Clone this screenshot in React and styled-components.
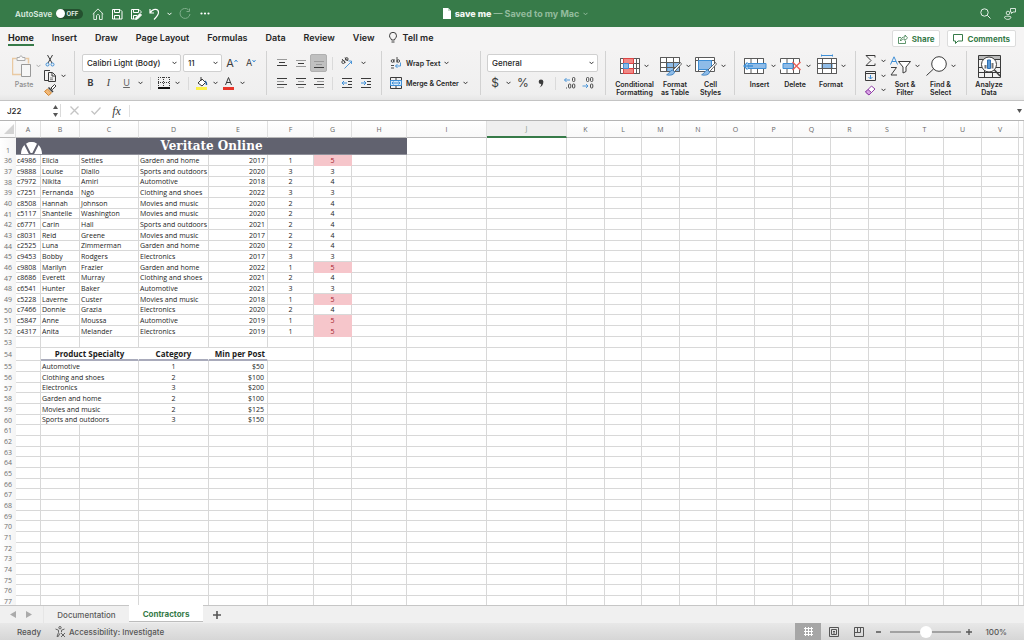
import React from "react";
import styled, { createGlobalStyle, css } from "styled-components";

const ui = `Inter, Roboto, "Liberation Sans", sans-serif`;
const sheetFont = `"Open Sans", "Noto Sans", "Liberation Sans", sans-serif`;
const ink = "#3b3b3b";
const blue = "#3f8fd6";
const green = "#377b49";

const Global = createGlobalStyle`
  * { box-sizing: border-box; }
  body { margin: 0; background: #fff; font-family: ${ui}; color: #262626; }
  button, input, select { font: inherit; color: inherit; margin: 0; }
  button { background: none; border: 0; padding: 0; }
`;

/* ---------- shell ---------- */
const Window = styled.div`
  height: 100vh;
  display: flex;
  flex-direction: column;
  overflow: hidden;
`;

const TitleBar = styled.header`
  height: 27px;
  flex: none;
  display: grid;
  grid-template-columns: 1fr auto 1fr;
  align-items: center;
  padding: 0 8px 0 15px;
  background: ${green};
  color: #fff;
`;

const Quick = styled.div`
  display: flex;
  align-items: center;
  gap: ${(p) => p.$gap || 7}px;
  justify-content: ${(p) => (p.$end ? "flex-end" : "flex-start")};
`;

const AutoSave = styled.label`
  display: flex;
  align-items: center;
  gap: 4px;
  font-size: 8px;
  font-weight: 600;
  color: #dcebe0;
  margin-right: 2px;
`;

const SwitchInput = styled.input`
  appearance: none;
  margin: 0;
  width: 27px;
  height: 10px;
  border-radius: 5px;
  background: #24502f;
  display: flex;
  align-items: center;
  justify-content: space-between;
  padding-right: 5px;
  &::before {
    content: "";
    width: 9px;
    height: 9px;
    border-radius: 50%;
    background: #fff;
  }
  &::after {
    content: "OFF";
    font: 700 6px ${ui};
    color: #e3eee6;
  }
`;

const IconButton = styled.button`
  display: flex;
  align-items: center;
  justify-content: center;
  width: ${(p) => (p.$w ? p.$w + "px" : "auto")};
  height: ${(p) => (p.$h ? p.$h + "px" : "auto")};
  flex: none;
  ${(p) =>
    p.$on &&
    css`
      background: #c0c0c0;
      border: 1px solid #b0b0b0;
      border-radius: 2px;
    `}
`;

const DocTitle = styled.h1`
  margin: 0;
  display: flex;
  align-items: center;
  gap: 4px;
  font-size: 9px;
  font-weight: 800;
  color: #f2f7f3;
`;
const Muted = styled.span`
  color: #93bb9d;
  font-weight: 700;
`;

/* ---------- ribbon ---------- */
const TabRow = styled.nav`
  height: 23px;
  flex: none;
  display: flex;
  align-items: flex-start;
  padding: 0 8px;
  background: #f5f4f4;
`;
const Tab = styled.button`
  height: 19px;
  padding-top: 3px;
  margin-right: 18px;
  font-size: 9px;
  font-weight: ${(p) => (p.$on ? 700 : 600)};
  border-bottom: 2px solid ${(p) => (p.$on ? green : "transparent")};
`;
const TellMe = styled(Tab)`
  display: flex;
  align-items: center;
  gap: 6px;
  margin-left: -4px;
`;
const Actions = styled.div`
  margin-left: auto;
  display: flex;
  gap: 7px;
  padding-top: 3px;
`;
const ActionButton = styled.button`
  height: 17px;
  display: flex;
  align-items: center;
  gap: 4px;
  padding: 0 5px;
  font-size: 8px;
  font-weight: 700;
  color: ${green};
  background: #fff;
  border: 1px solid #dcdcdc;
  border-radius: 2px;
`;

const Ribbon = styled.div`
  height: 51px;
  flex: none;
  display: flex;
  background: linear-gradient(#f4f3f3, #efefef 44px, #e6e6e6);
  border-bottom: 1px solid #c4c4c4;
`;
const Group = styled.section`
  flex: none;
  height: 44px;
  margin-top: 1px;
  display: flex;
  gap: ${(p) => p.$gap || 0}px;
  flex-direction: ${(p) => (p.$col ? "column" : "row")};
  justify-content: ${(p) => (p.$col ? "space-between" : "flex-start")};
  padding: 3px ${(p) => p.$pr ?? 6}px 3px ${(p) => p.$pl ?? 6}px;
  border-right: 1px solid ${(p) => (p.$last ? "transparent" : "#d2d2d2")};
  width: ${(p) => p.$w}px;
`;
const Line = styled.div`
  display: flex;
  align-items: center;
  height: 18px;
`;
const Slot = styled.span`
  flex: none;
  width: ${(p) => p.$w}px;
  display: flex;
  align-items: center;
  justify-content: ${(p) => (p.$left ? "flex-start" : "center")};
`;
const Rule = styled.span`
  width: 1px;
  height: 13px;
  background: #dadada;
  flex: none;
`;
const Glyph = styled.span`
  font-size: ${(p) => p.$size || 10}px;
  font-weight: ${(p) => p.$weight || 400};
  font-style: ${(p) => (p.$italic ? "italic" : "normal")};
  font-family: ${(p) => (p.$serif ? `"Liberation Serif", serif` : ui)};
  text-decoration: ${(p) => (p.$under ? "underline" : "none")};
  color: ${(p) => p.$color || ink};
  line-height: 12px;
`;
const TextButton = styled.button`
  display: flex;
  align-items: center;
  gap: 4px;
  font-size: 7px;
  font-weight: 600;
  height: 18px;
`;
const BigButton = styled.button`
  flex: none;
  width: ${(p) => p.$w}px;
  height: 43px;
  display: flex;
  flex-direction: column;
  align-items: center;
  font-size: 7px;
  font-weight: ${(p) => (p.$dim ? 500 : 600)};
  line-height: 8px;
  text-align: center;
  white-space: nowrap;
  color: ${(p) => (p.$dim ? "#8c8c8c" : "#262626")};
`;
const BigArt = styled.span`
  height: 24px;
  margin-bottom: 3px;
  display: flex;
  align-items: center;
  gap: 4px;
  flex: none;
  padding-left: ${(p) => (p.$pl ?? 0)}px;
`;
const Stack = styled.div`
  display: flex;
  flex-direction: column;
  justify-content: space-between;
  flex: none;
  width: ${(p) => p.$w}px;
  height: 43px;
`;
const StackItem = styled.button`
  display: flex;
  align-items: center;
  gap: 5px;
  height: 14px;
`;

const SelectWrap = styled.span`
  position: relative;
  flex: none;
  width: ${(p) => p.$w}px;
  margin-right: 2px;
  > svg { position: absolute; right: 4px; top: 7px; pointer-events: none; }
`;
const Select = styled.select`
  appearance: none;
  width: 100%;
  height: 18px;
  padding: 0 4px;
  font-size: 8px;
  font-weight: 500;
  border: 1px solid #d0d0d0;
  border-radius: 2px;
  background: #fff;
  display: block;
`;

/* ---------- formula bar ---------- */
const FormulaBar = styled.div`
  height: 20px;
  flex: none;
  display: flex;
  align-items: center;
  background: #fff;
  border-bottom: 1px solid #b4b4b4;
`;
const NameBox = styled.input`
  width: 50px;
  height: 18px;
  border: 0;
  padding: 0 7px;
  font-size: 8px;
  font-weight: 500;
  background: transparent;
`;
const Formula = styled.input`
  flex: 1;
  min-width: 0;
  height: 12px;
  border: 0;
  border-left: 1px solid #e0e0e0;
  font-size: 8px;
  padding: 0 4px;
`;

/* ---------- sheet ---------- */
const SheetArea = styled.main`
  flex: 1 1 0;
  min-height: 0;
  overflow: hidden;
`;
const Sheet = styled.table`
  table-layout: fixed;
  width: 100%;
  border-collapse: separate;
  border-spacing: 0;
  font-family: ${sheetFont};
  font-size: 7px;
  line-height: 9px;
  color: #1c1c1c;
`;
const ColHead = styled.th`
  height: 17px;
  padding: 0;
  font-size: 7px;
  font-weight: 400;
  color: ${(p) => (p.$on ? "#7d9a84" : "#666")};
  background: ${(p) => (p.$on ? "#efefef" : "linear-gradient(#fff, #f8f8f8)")};
  border-right: 1px solid #e0e0e0;
  border-bottom: ${(p) => (p.$on ? `2px solid ${green}` : "1px solid #b8b8b8")};
`;
const RowHead = styled.th`
  padding: 0;
  font-size: 7px;
  font-weight: 400;
  color: #707070;
  vertical-align: ${(p) => (p.$low ? "bottom" : "middle")};
  background: linear-gradient(90deg, #fff, #f4f4f4);
`;
const Row = styled.tr`
  > * { height: ${(p) => p.$h}px; }
`;
const Cell = styled.td`
  padding: 0 1px;
  white-space: nowrap;
  overflow: hidden;
  text-align: ${(p) => p.$align || "left"};
  font-weight: ${(p) => (p.$bold ? 700 : 400)};
  font-size: ${(p) => (p.$bold ? 8 : 7)}px;
  padding-right: ${(p) => (p.$align === "right" ? p.$pr || 2 : 1)}px;
  border-right: 1px solid ${(p) => (p.$bold ? "transparent" : "#d8d8d8")};
  border-bottom: 1px solid #d8d8d8;
  ${(p) => p.$rule && css`border-bottom: 2px solid #a9abbb;`}
  ${(p) =>
    p.$hot &&
    css`
      background: #f6c6cb;
      border-color: #f6c6cb;
      color: #a3202b;
    `}
`;
const TitleCell = styled.td`
  position: relative;
  padding: 0;
  background: #61626f;
  border-bottom: 1px solid #8f909a;
  color: #fff;
  text-align: center;
  font: 700 12px/15px "DejaVu Serif", "Liberation Serif", serif;
  > svg { position: absolute; left: 5px; bottom: 0; }
`;

/* ---------- bottom ---------- */
const SheetTabs = styled.nav`
  height: 18px;
  flex: none;
  display: flex;
  align-items: flex-start;
  background: #f0f0f0;
  border-top: 1px solid #c6c6c6;
`;
const SheetNav = styled.div`
  width: 44px;
  height: 17px;
  display: flex;
  align-items: center;
  gap: 10px;
  padding-left: 10px;
  border-right: 1px solid #e6e6e6;
`;
const SheetTab = styled.button`
  width: ${(p) => p.$w}px;
  height: 17px;
  margin-top: -1px;
  padding-top: 2px;
  font-size: 8px;
  font-weight: ${(p) => (p.$on ? 700 : 500)};
  color: ${(p) => (p.$on ? green : "#5a5a5a")};
  ${(p) =>
    p.$on &&
    css`
      background: #fff;
      border-bottom: 1px solid #bdbdbd;
    `}
`;
const Status = styled.footer`
  height: 17px;
  flex: none;
  display: flex;
  align-items: center;
  padding: 0 17px;
  font-size: 8px;
  font-weight: 500;
  color: #555;
  background: linear-gradient(#e8e8e8, #d6d6d6);
`;
const StatusRight = styled.div`
  margin-left: auto;
  display: flex;
  align-items: center;
`;
const Access = styled.button`
  display: flex;
  align-items: center;
  gap: 3px;
  margin-left: 14px;
`;
const ViewButton = styled.button`
  width: ${(p) => (p.$on ? 26 : 25)}px;
  height: 17px;
  display: flex;
  align-items: center;
  justify-content: center;
  background: ${(p) => (p.$on ? "#a6a6a6" : "transparent")};
`;
const Zoom = styled.input`
  appearance: none;
  width: 71px;
  height: 12px;
  margin: 0 5px;
  background: linear-gradient(#a2a2a2, #a2a2a2) center / 100% 2px no-repeat;
  &::-webkit-slider-thumb {
    appearance: none;
    width: 12px;
    height: 12px;
    border-radius: 50%;
    background: #fff;
  }
`;
const Percent = styled.output`
  width: 35px;
  text-align: right;
`;

/* ---------- icons ---------- */
const Svg = ({ w, h, c = ink, sw = 1, children }) => (
  <svg width={w} height={h} viewBox={`0 0 ${w} ${h}`} fill="none" stroke={c} strokeWidth={sw} aria-hidden="true">
    {children}
  </svg>
);
const Chev = ({ c = "#333" }) => (
  <Svg w={5} h={4} c={c} sw={1}><path d="M.5 .8l2 2 2-2" /></Svg>
);
const Bars = ({ rows }) => (
  <Svg w={12} h={12}>
    {rows.map(([x, y, w, light], i) => (
      <path key={i} d={`M${x} ${y}.5h${w}`} stroke={light ? "#9a9a9a" : ink} />
    ))}
  </Svg>
);
const Grid = ({ w = 20, h = 16, children }) => (
  <Svg w={w} h={h} c="#5a5a5a">
    <path fill="#fff" d={`M.5 .5H${w - 0.5}V${h - 0.5}H.5z`} />
    <path d={`M.5 5.5H${w - 1}M.5 10.5H${w - 1}M3.5 .5V${h - 1}M13.5 .5V${h - 1}M16.5 .5V${h - 1}M.5 .5H${w - 0.5}V${h - 0.5}H.5z`} />
    {children}
  </Svg>
);
const Brush = () => (
  <>
    <path d="M20.5 5.5L13 13l1.6 1.6L21.5 7z" fill="#fff" stroke="#444" strokeWidth=".8" />
    <path d="M12.6 13.2c-3 0-2.6 3.2-6 4.6 3.6 1.2 8-.2 8-3z" fill="#8fbce8" stroke="#2f78bd" strokeWidth=".8" />
  </>
);
const Logo = () => (
  <Svg w={21} h={12} c="none">
    <path d="M0 12C0 5 4.500 0 10.500 0S21 5 21 12z" fill="#fff" />
    <path d="M4 2l5 10h3l5-10" stroke="#61626f" strokeWidth="2" />
    <path d="M6 1.300C8 0 13 0 15 1.300L10.500 8.500z" fill="#fff" />
  </Svg>
);

/* ---------- data ---------- */
const letters = "ABCDEFGHIJKLMNOPQRSTUV".split("");
const widths = [25, 39, 59, 70, 59, 46, 38, 55, 80, 80, 38, 37, 38, 37, 38, 38, 38, 38, 37, 38, 38, 37];
const people = [
  ["c4986", "Elicia", "Settles", "Garden and home", 2017, 1, 5],
  ["c9888", "Louise", "Diallo", "Sports and outdoors", 2020, 3, 3],
  ["c7972", "Nikita", "Amiri", "Automotive", 2018, 2, 4],
  ["c7251", "Fernanda", "Ngô", "Clothing and shoes", 2022, 3, 3],
  ["c8508", "Hannah", "Johnson", "Movies and music", 2020, 2, 4],
  ["c5117", "Shantelle", "Washington", "Movies and music", 2020, 2, 4],
  ["c6771", "Carin", "Hall", "Sports and outdoors", 2021, 2, 4],
  ["c8031", "Reid", "Greene", "Movies and music", 2017, 2, 4],
  ["c2525", "Luna", "Zimmerman", "Garden and home", 2020, 2, 4],
  ["c9453", "Bobby", "Rodgers", "Electronics", 2017, 3, 3],
  ["c9808", "Marilyn", "Frazier", "Garden and home", 2022, 1, 5],
  ["c8686", "Everett", "Murray", "Clothing and shoes", 2021, 2, 4],
  ["c6541", "Hunter", "Baker", "Automotive", 2021, 3, 3],
  ["c5228", "Laverne", "Custer", "Movies and music", 2018, 1, 5],
  ["c7466", "Donnie", "Grazia", "Electronics", 2020, 2, 4],
  ["c5847", "Anne", "Moussa", "Automotive", 2019, 1, 5],
  ["c4317", "Anita", "Melander", "Electronics", 2019, 1, 5],
];
const rates = [
  ["Automotive", 1, "$50"],
  ["Clothing and shoes", 2, "$100"],
  ["Electronics", 3, "$200"],
  ["Garden and home", 2, "$100"],
  ["Movies and music", 2, "$125"],
  ["Sports and outdoors", 3, "$150"],
];
const aligns = ["left", "left", "left", "left", "right", "center", "center"];
const heightOf = (i) => (i % 3 === 2 ? 10 : 11);
const blanks = (n) => Array.from({ length: n }, (_, i) => <Cell key={"b" + i} />);

function Worksheet() {
  return (
    <Sheet>
      <colgroup>
        <col width={16} />
        {widths.map((w, i) => <col key={i} width={w} />)}
        <col />
      </colgroup>
      <thead>
        <tr>
          <ColHead><Svg w={16} h={13} c="none"><path d="M14 2v10H4z" fill="#d3d3d3" /></Svg></ColHead>
          {letters.map((l) => <ColHead key={l} scope="col" $on={l === "J"}>{l}</ColHead>)}
          <ColHead />
        </tr>
      </thead>
      <tbody>
        <Row $h={17}>
          <RowHead $low>1</RowHead>
          <TitleCell colSpan={8}><Logo />Veritate Online</TitleCell>
          {blanks(15)}
        </Row>
        {people.map((p, i) => (
          <Row key={p[0]} $h={heightOf(i)}>
            <RowHead>{36 + i}</RowHead>
            {p.map((v, j) => (
              <Cell key={j} $align={aligns[j]} $hot={j === 6 && v === 5}>{v}</Cell>
            ))}
            {blanks(16)}
          </Row>
        ))}
        <Row $h={11}><RowHead>53</RowHead>{blanks(23)}</Row>
        <Row $h={13}>
          <RowHead>54</RowHead>
          <Cell />
          <Cell as="th" colSpan={2} $align="center" $bold $rule>Product Specialty</Cell>
          <Cell as="th" $align="center" $bold $rule>Category</Cell>
          <Cell as="th" $align="right" $bold $rule>Min per Post</Cell>
          {blanks(18)}
        </Row>
        {rates.map(([name, cat, min], i) => (
          <Row key={name} $h={heightOf(i)}>
            <RowHead>{55 + i}</RowHead>
            <Cell />
            <Cell colSpan={2}>{name}</Cell>
            <Cell $align="center">{cat}</Cell>
            <Cell $align="right" $pr={3}>{min}</Cell>
            {blanks(18)}
          </Row>
        ))}
        {Array.from({ length: 17 }, (_, i) => (
          <Row key={i} $h={heightOf(i)}><RowHead>{61 + i}</RowHead>{blanks(23)}</Row>
        ))}
      </tbody>
    </Sheet>
  );
}

function RibbonGroups() {
  return (
    <Ribbon>
      <Group $w={75} $pl={8} $pr={0} $gap={4}>
        <BigButton $w={32} $dim>
          <BigArt $pl={4}>
            <Svg w={20} h={22} c="#e9c9a2">
              <path d="M4.500 3.500H.500v16h9M13.500 3.500h3v5" strokeWidth="1.500" />
              <path d="M5 5.500v-3h2.500c0-2 3-2 3 0H13v3z" stroke="#aaa" fill="#f8f8f8" />
              <path d="M9.500 9.500h9v12h-9z" stroke="#999" fill="#f6f6f6" />
            </Svg>
            <Chev c="#aaa" />
          </BigArt>
          Paste
        </BigButton>
        <Stack $w={28}>
          <StackItem aria-label="Cut">
            <Svg w={12} h={12}><path d="M3.500 0L8 8M8.500 0L4 8" /><circle cx="3.500" cy="9.500" r="1.500" stroke={blue} /><circle cx="8.500" cy="9.500" r="1.500" stroke={blue} /></Svg>
          </StackItem>
          <StackItem aria-label="Copy">
            <Svg w={12} h={12}><path d="M4 10.500H.500V.500h5.500M4.500 2.500h4l3 3v6h-7zM8 3v3h3" /><path d="M6 8h3M6 9.700h3" strokeWidth=".6" /></Svg>
            <Chev />
          </StackItem>
          <StackItem aria-label="Format painter">
            <Svg w={12} h={12}><path d="M7 4l3.500-3.500L12 2 8.500 5.500z" fill="#fff" /><path d="M4.500 3.500l4.500 4.500" strokeWidth="1.500" /><path d="M3.500 5L7.500 9 4.500 11.500.500 7.500z" fill="#f1b877" stroke="#d08430" /></Svg>
          </StackItem>
        </Stack>
      </Group>

      <Group $w={192} $col $pl={7}>
        <Line>
          <SelectWrap $w={99}><Select aria-label="Font"><option>Calibri Light (Body)</option></Select><Chev /></SelectWrap>
          <SelectWrap $w={39}><Select aria-label="Font size"><option>11</option></Select><Chev /></SelectWrap>
          <IconButton $w={16} aria-label="Increase font size"><Glyph $size={11}>A</Glyph><Svg w={4} h={9} c={blue}><path d="M.500 3l1.500-2 1.500 2" /></Svg></IconButton>
          <IconButton $w={22} aria-label="Decrease font size"><Glyph $size={9}>A</Glyph><Svg w={4} h={9} c={blue}><path d="M.500 1l1.500 2 1.500-2" /></Svg></IconButton>
        </Line>
        <Line>
          <IconButton $w={17}><Glyph $size={9} $weight={700}>B</Glyph></IconButton>
          <IconButton $w={19}><Glyph $size={10} $italic $serif>I</Glyph></IconButton>
          <IconButton $w={17}><Glyph $size={9} $under $color="#666">U</Glyph></IconButton>
          <Slot $w={10}><Chev /></Slot>
          <Slot $w={10}><Rule /></Slot>
          <IconButton $w={17} aria-label="Borders"><Svg w={12} h={12}><path d="M0 .500h12M0 5.500h12M.500 0v10M5.500 0v10M11.500 0v10" strokeDasharray="1 1" /><path d="M0 11h12" stroke="#111" strokeWidth="2" /></Svg></IconButton>
          <Slot $w={11}><Chev /></Slot>
          <Slot $w={10}><Rule /></Slot>
          <IconButton $w={17} aria-label="Fill color"><Svg w={12} h={13}><path d="M2 6l4-4 3.500 3.500L6 9z" fill="#fff" /><path d="M5 0v4" /><path d="M9 4c1.500 1 1.700 2.500 1.500 4" stroke="#245e9c" strokeWidth="1.500" /><path d="M0 11.500h11" stroke="#fbf044" strokeWidth="3" /></Svg></IconButton>
          <Slot $w={10}><Chev /></Slot>
          <IconButton $w={17} aria-label="Font color"><Svg w={11} h={13}><path d="M2.500 8l3-7.500 3 7.500M3.500 5.500h4" /><path d="M0 11.500h11" stroke="#e8352a" strokeWidth="3" /></Svg></IconButton>
          <Slot $w={10}><Chev /></Slot>
        </Line>
      </Group>

      <Group $w={115} $col $pl={6}>
        <Line>
          <IconButton $w={18} aria-label="Top align"><Bars rows={[[1, 2, 10, 1], [3, 5, 6], [1, 8, 10]]} /></IconButton>
          <IconButton $w={19} aria-label="Middle align"><Bars rows={[[1, 3, 10, 1], [3, 6, 6], [1, 9, 10, 1]]} /></IconButton>
          <IconButton $w={17} $h={18} $on aria-label="Bottom align"><Bars rows={[[1, 4, 10, 1], [3, 7, 6, 1], [1, 10, 10]]} /></IconButton>
          <Slot $w={11}><Rule /></Slot>
          <IconButton $w={18} aria-label="Orientation"><Svg w={12} h={12} sw={0.9}><path d="M3.500 11.500l7-7M7.500 4h3v3" stroke={blue} /><circle cx="2.300" cy="5" r="1.500" /><path d="M1 2l3.500 4M4 .500L7 4" /><circle cx="5.700" cy="2" r="1.400" /></Svg></IconButton>
          <Slot $w={14}><Chev /></Slot>
        </Line>
        <Line>
          <IconButton $w={18} aria-label="Align left"><Bars rows={[[1, 1, 10], [1, 4, 7, 1], [1, 7, 10], [1, 10, 7, 1]]} /></IconButton>
          <IconButton $w={19} aria-label="Center"><Bars rows={[[1, 1, 10], [3, 4, 6, 1], [1, 7, 10], [3, 10, 6, 1]]} /></IconButton>
          <IconButton $w={17} aria-label="Align right"><Bars rows={[[1, 1, 10], [4, 4, 7, 1], [1, 7, 10], [4, 10, 7, 1]]} /></IconButton>
          <Slot $w={11}><Rule /></Slot>
          <IconButton $w={18} aria-label="Decrease indent"><Svg w={12} h={10}><path d="M1 .500h10M7 3.500h4M7 6.500h4M1 9.500h10" /><path d="M6 5H1M3 3L1 5l2 2" stroke={blue} /></Svg></IconButton>
          <IconButton $w={19} aria-label="Increase indent"><Svg w={12} h={10}><path d="M1 .500h10M7 3.500h4M7 6.500h4M1 9.500h10" /><path d="M1 5h5M4 3l2 2-2 2" stroke={blue} /></Svg></IconButton>
        </Line>
      </Group>

      <Group $w={99} $col $pl={8}>
        <TextButton><Svg w={12} h={12} sw={0.9}><circle cx="2.500" cy="4" r="1.300" /><path d="M4 2v3.500M7 0v5.500M1 8.500h3M1 11h3" /><circle cx="8.300" cy="4" r="1.300" /><path d="M10.500 5.500v3.500H5.500M7.500 7L5.500 9l2 2" stroke={blue} /></Svg>Wrap Text<Chev /></TextButton>
        <TextButton><Svg w={12} h={12}><path d="M.500 .500h11v11H.500zM6 .500v2.500M6 9v2.500" /><path d="M.500 3.500h11v5H.500z" fill="#d7e9f9" stroke={blue} /><path d="M2 6h8M3.500 4.500L2 6l1.500 1.500M8.500 4.500L10 6 8.500 7.500" stroke={blue} /></Svg>Merge &amp; Center<Chev /></TextButton>
      </Group>

      <Group $w={125} $col>
        <Line><SelectWrap $w={111}><Select aria-label="Number format"><option>General</option></Select><Chev /></SelectWrap></Line>
        <Line>
          <IconButton $w={16}><Glyph $size={12}>$</Glyph></IconButton>
          <Slot $w={11}><Chev /></Slot>
          <IconButton $w={18}><Glyph $size={12}>%</Glyph></IconButton>
          <IconButton $w={18} aria-label="Comma style"><Svg w={6} h={9} c="none"><circle cx="3" cy="2.800" r="2.300" fill={ink} /><path d="M5.300 2.500c.2 3-1.300 5-3.800 6 1.500-1.500 2-3 1.500-4z" fill={ink} /></Svg></IconButton>
          <Slot $w={11}><Rule /></Slot>
          <IconButton $w={18} aria-label="Increase decimal"><Svg w={12} h={12} sw={0.9}><path d="M6 3H.500M2.500 1L.500 3l2 2" stroke={blue} /><rect x="8.500" y=".500" width="2.300" height="4" rx="1" /><path d="M2.500 11.500v-1" /><rect x="4.500" y="7" width="2.300" height="4" rx="1" /><rect x="8.500" y="7" width="2.300" height="4" rx="1" /></Svg></IconButton>
          <IconButton $w={18} aria-label="Decrease decimal"><Svg w={12} h={12} sw={0.9}><path d="M.500 9H6M4 7l2 2-2 2" stroke={blue} /><rect x="4.500" y=".500" width="2.300" height="4" rx="1" /><rect x="8.500" y=".500" width="2.300" height="4" rx="1" /><rect x="8.500" y="7" width="2.300" height="4" rx="1" /></Svg></IconButton>
        </Line>
      </Group>

      <Group $w={129} $pl={7} $pr={0}>
        <BigButton $w={43}>
          <BigArt><Grid><path d="M3.500 .500h10v5h-10zM3.500 10.500h10v5h-10z" fill="#f08a86" stroke="#d44" /><path d="M3.500 5.500h5v5h-5z" fill="#8fbce8" stroke={blue} /></Grid><Chev /></BigArt>
          <span>Conditional<br />Formatting</span>
        </BigButton>
        <BigButton $w={38}>
          <BigArt><Svg w={22} h={19} c="#5a5a5a"><path d="M.500 .500h19v14H.500z" fill="#fff" /><path d="M7 5.500h12.500v9H7z" fill="#8fbce8" stroke={blue} /><path d="M.500 .500h19v14H.500zM.500 5.500h19M.500 10.500h19M6.500 .500v14M13.500 .500v14" /><Brush /></Svg><Chev /></BigArt>
          <span>Format<br />as Table</span>
        </BigButton>
        <BigButton $w={33}>
          <BigArt><Svg w={22} h={19} c="#5a5a5a"><path d="M.500 .500h19v14H.500z" fill="#fff" /><path d="M.500 3.500h19M3.500 .500v14" /><path d="M3.500 3.500h13v9h-13z" fill="#8fbce8" stroke={blue} /><Brush /></Svg><Chev /></BigArt>
          <span>Cell<br />Styles</span>
        </BigButton>
      </Group>

      <Group $w={121} $pl={7} $pr={0}>
        <BigButton $w={35}>
          <BigArt><Svg w={24} h={16} c="#5a5a5a"><path d="M1.500 .500h19v15h-19z" fill="#fff" /><path d="M1.500 4.500v-4h19v4M1.500 11.500v4h19v-4M8 .500v15M14.500 .500v15" /><path d="M5 5.500h18v5H5z" fill="#8fbce8" stroke={blue} /><path d="M10 8H1M4.500 4.500L1 8l3.500 3.500" stroke={blue} strokeWidth="1.300" /></Svg><Chev /></BigArt>
          Insert
        </BigButton>
        <BigButton $w={36}>
          <BigArt><Svg w={22} h={16} c="#5a5a5a"><path d="M.500 .500h19v15H.500z" fill="#fff" stroke="none" /><path d="M.500 4.500v-4h19v4M.500 11.500v4h19v-4M7 .500v15M13.500 .500v15" /><path d="M3 5.500h10v5H3z" fill="#8fbce8" stroke={blue} /><path d="M12.500 4l8 8M20.500 4l-8 8" stroke="#e8605a" strokeWidth="1.400" /></Svg><Chev /></BigArt>
          Delete
        </BigButton>
        <BigButton $w={36}>
          <BigArt><Svg w={20} h={24} c="#5a5a5a"><path d="M.500 4.500h19v15H.500z" fill="#fff" /><path d="M5 9.500h10v5H5z" fill="#8fbce8" stroke={blue} /><path d="M.500 4.500h19v15H.500zM.500 9.500h19M.500 14.500h19M5.500 4.500v15M14.500 4.500v15" /><path d="M4 1.500h12M4.500 .500v2M15.500 .500v2" stroke={blue} /></Svg><Chev /></BigArt>
          Format
        </BigButton>
      </Group>

      <Group $w={111} $pl={9} $pr={0}>
        <Stack $w={22}>
          <StackItem aria-label="AutoSum"><Svg w={11} h={12}><path d="M10 2.500V.500H1L6 5.500 1 10.500h9v-2" /></Svg><Chev /></StackItem>
          <StackItem aria-label="Fill"><Svg w={11} h={10}><path d="M.500 .500h10v9H.500zM.500 2.500h10" /><path d="M5.500 4v4M3.500 6l2 2 2-2" stroke={blue} /></Svg><Chev /></StackItem>
          <StackItem aria-label="Clear"><Svg w={11} h={11} c="#8e3fa5"><path d="M.500 7L6.500 1l3.500 3L4 10z" fill="#fff" /><path d="M.500 7l2.500-2.500 3.500 3L4 10z" fill="#d9a3e6" /></Svg><Chev /></StackItem>
        </Stack>
        <BigButton $w={36}>
          <BigArt><Svg w={21} h={20}><path d="M.500 8.500L4 .800l3.500 7.700M1.800 5.500h4.400" stroke={blue} /><path d="M1 11.500h5.500L1 19h6" /><path d="M8.500 5.500h12l-4.500 5.500v4.500l-3 1.500v-6z" fill="#fff" /></Svg><Chev /></BigArt>
          <span>Sort &amp;<br />Filter</span>
        </BigButton>
        <BigButton $w={35}>
          <BigArt><Svg w={21} h={20}><circle cx="13" cy="8" r="7.300" fill="#fff" /><path d="M7.500 13L.500 19.500" /></Svg><Chev /></BigArt>
          <span>Find &amp;<br />Select</span>
        </BigButton>
      </Group>

      <Group $w={44} $pl={5} $pr={0} $last>
        <BigButton $w={34}>
          <BigArt><Svg w={23} h={23}><path d="M.500 .500h22v22H.500z" fill="#f2f2f2" /><path d="M1 1h21v3H1z" fill="#bbb" stroke="none" /><path d="M.500 4.500h22M.500 12.500h22M.500 17.500h22M6.500 15v7.500M14.500 17v5.500" /><circle cx="11" cy="9.500" r="7.500" fill="#fff" /><path d="M16.500 15l5.500 6" strokeWidth="1.500" /><path d="M7.500 13.500V10M14.500 13.500V8" strokeWidth="2" stroke="#777" /><path d="M9.500 5h3v8.500h-3z" fill="#5b9bd9" stroke="#2f6fb0" /></Svg></BigArt>
          <span>Analyze<br />Data</span>
        </BigButton>
      </Group>
    </Ribbon>
  );
}

export default function App() {
  return (
    <>
      <Global />
      <Window>
        <TitleBar>
          <Quick $gap={7}>
            <AutoSave>AutoSave<SwitchInput type="checkbox" role="switch" /></AutoSave>
            <IconButton aria-label="Home"><Svg w={12} h={12} c="#dcebe0"><path d="M.800 6L6 .900 11.200 6M1.800 5v6.500h2.700V8c0-2 3-2 3 0v3.500h2.700V5" /></Svg></IconButton>
            <IconButton aria-label="Save"><Svg w={12} h={12} c="#fff"><path d="M1.500 1.500h7.500l2 2v7.500H1.500zM3.500 1.500v3h5v-3M3.500 11V7.500h5V11" /></Svg></IconButton>
            <IconButton aria-label="Save as"><Svg w={12} h={12} c="#fff"><path d="M5 11H1.500V1.500H9l2 2V5M3.500 1.500v3h5v-3M3.500 11V7.500H7" /><path d="M5.500 11.500l.5-2 4-4 1.500 1.500-4 4z" fill="#fff" /></Svg></IconButton>
            <IconButton aria-label="Undo"><Svg w={11} h={12} c="#fff" sw={1.2}><path d="M1 1v4h4M1.200 4.800C4 0 9.500 .500 9.500 4.500c0 2.500-2 4.500-4.500 7" /></Svg></IconButton>
            <Chev c="#fff" />
            <IconButton aria-label="Redo"><Svg w={12} h={12} c="#7fae8b"><path d="M9.500 1.800A5 5 0 1 0 11 6M7.500 3.500h3V.500" /></Svg></IconButton>
            <IconButton $w={14} aria-label="More"><Svg w={10} h={3} c="none"><circle cx="1.500" cy="1.500" r="1.100" fill="#fff" /><circle cx="5" cy="1.500" r="1.100" fill="#fff" /><circle cx="8.500" cy="1.500" r="1.100" fill="#fff" /></Svg></IconButton>
          </Quick>
          <DocTitle>
            <Svg w={8} h={11} c="none"><path d="M0 0h5l3 3v8H0z" fill="#fff" /><path d="M5 0l3 3H5z" fill="#c8d8cc" /></Svg>
            <span>save me <Muted>— Saved to my Mac</Muted></span>
            <Chev c="#93bb9d" />
          </DocTitle>
          <Quick $gap={13} $end>
            <IconButton aria-label="Search"><Svg w={11} h={11} c="#e6f0e8"><circle cx="4.500" cy="4.500" r="3.700" /><path d="M7.300 7.300l3.200 3.200" /></Svg></IconButton>
            <IconButton aria-label="Collaborate"><Svg w={12} h={12} c="#e6f0e8" sw={0.9}><circle cx="4" cy="5" r="1.800" /><path d="M.500 9c0 3.200 6.500 3.200 6.500 0 0-1-6.500-1-6.500 0zM6.500 .500h5v3.500H9L7.500 5.500V4h-1z" /></Svg></IconButton>
          </Quick>
        </TitleBar>

        <TabRow>
          {["Home", "Insert", "Draw", "Page Layout", "Formulas", "Data", "Review", "View"].map((t) => (
            <Tab key={t} $on={t === "Home"}>{t}</Tab>
          ))}
          <TellMe><Svg w={8} h={11}><path d="M2.500 8c0-1.500-2-2-2-4.200a3.500 3.500 0 0 1 7 0C7.500 6 5.500 6.500 5.500 8zM2.500 10h3" /></Svg>Tell me</TellMe>
          <Actions>
            <ActionButton><Svg w={10} h={10} c={green}><path d="M3 3.500H.500v6h7V7M2.500 7c0-3 2-4 4.500-4V1l2.500 2.800L7 6.500V5C5 5 3.500 5.500 2.500 7z" strokeWidth=".8" /></Svg>Share</ActionButton>
            <ActionButton><Svg w={10} h={10} c={green}><path d="M.500 .500h9v6.500H5L2.500 9.500V7h-2z" /></Svg>Comments</ActionButton>
          </Actions>
        </TabRow>

        <RibbonGroups />

        <FormulaBar>
          <NameBox aria-label="Name box" defaultValue="J22" />
          <Slot $w={10}><Svg w={5} h={14} c="none"><path d="M0 5L2.500 1 5 5zM0 9h5L2.500 13z" fill="#555" /></Svg></Slot>
          <Rule />
          <IconButton $w={27} aria-label="Cancel"><Svg w={9} h={9} c="#c4c4c4" sw={1.3}><path d="M.500 .500l8 8M8.500 .500l-8 8" /></Svg></IconButton>
          <IconButton $w={16} aria-label="Enter"><Svg w={10} h={8} c="#c4c4c4" sw={1.3}><path d="M.500 4l3 3L9.500 .500" /></Svg></IconButton>
          <IconButton $w={25}><Glyph $serif $italic $size={12}>fx</Glyph></IconButton>
          <Formula aria-label="Formula" />
          <Slot $w={10}><Svg w={5} h={4} c="none"><path d="M0 0h5L2.500 4z" fill="#555" /></Svg></Slot>
        </FormulaBar>

        <SheetArea><Worksheet /></SheetArea>

        <SheetTabs>
          <SheetNav>
            <Svg w={6} h={7} c="none"><path d="M6 0v7L0 3.500z" fill="#aaa" /></Svg>
            <Svg w={6} h={7} c="none"><path d="M0 0v7l6-3.500z" fill="#aaa" /></Svg>
          </SheetNav>
          <SheetTab $w={85}>Documentation</SheetTab>
          <SheetTab $w={74} $on>Contractors</SheetTab>
          <IconButton $w={28} $h={17} aria-label="Add sheet"><Svg w={8} h={8} c="#555" sw={1.6}><path d="M4 0v8M0 4h8" /></Svg></IconButton>
        </SheetTabs>

        <Status>
          Ready
          <Access><Svg w={11} h={11} c="#555" sw={0.9}><circle cx="5" cy="1.700" r="1.200" /><path d="M.500 3l3 1.200v2.300L2 10.500l1 .3 2-3.500M9.500 3l-3 1.200v2M6 7l4 4M10 7l-4 4" /></Svg>Accessibility: Investigate</Access>
          <StatusRight>
            <ViewButton $on aria-label="Normal view"><Svg w={9} h={9} c="#fff"><path d="M0 1.500h9M0 4.500h9M0 7.500h9M1.500 0v9M4.500 0v9M7.500 0v9" /></Svg></ViewButton>
            <ViewButton aria-label="Page layout view"><Svg w={10} h={10} c="#555"><path d="M.500 .500h9v9h-9zM2.500 2.500h5v5h-5zM4 4.500h2M4 6h2" /></Svg></ViewButton>
            <ViewButton aria-label="Page break view"><Svg w={10} h={10} c="#555"><path d="M.500 .500h9v9h-9zM.500 5.500h6M3.500 .500v5M6.500 .500v5" /></Svg></ViewButton>
            <IconButton $w={14} aria-label="Zoom out"><Svg w={5} h={2} c="#555" sw={1.500}><path d="M0 1h5" /></Svg></IconButton>
            <Zoom type="range" aria-label="Zoom" defaultValue={50} />
            <IconButton aria-label="Zoom in"><Svg w={6} h={6} c="#555" sw={1.300}><path d="M3 0v6M0 3h6" /></Svg></IconButton>
            <Percent>100%</Percent>
          </StatusRight>
        </Status>
      </Window>
    </>
  );
}
